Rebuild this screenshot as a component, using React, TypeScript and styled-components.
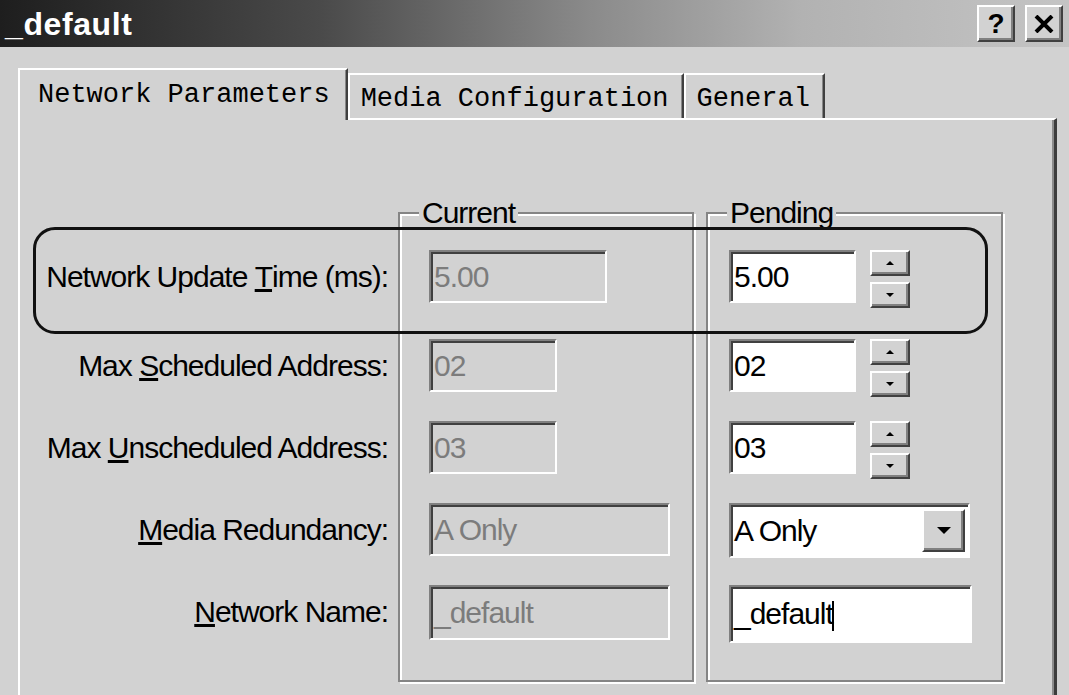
import styled, { createGlobalStyle, css } from 'styled-components';

const face = '#d2d2d2';

const GlobalStyle = createGlobalStyle`
  html, body {
    margin: 0;
    padding: 0;
    background: ${face};
  }
  body {
    font-family: 'Liberation Sans', Arial, sans-serif;
  }
`;

const raised = css`
  box-sizing: border-box;
  background: ${face};
  border-top: 2px solid #fff;
  border-left: 2px solid #fff;
  border-right: 2px solid #404040;
  border-bottom: 2px solid #404040;
  box-shadow: inset -2px -2px 0 #808080;
`;

const uiText = css`
  font-family: 'Liberation Sans', Arial, sans-serif;
  font-size: 30px;
  letter-spacing: -1px;
  line-height: 34px;
  white-space: nowrap;
`;

// rows of a column; the first row sits a little further from the rest
const rowStack = css`
  display: flex;
  flex-direction: column;
  gap: 29px;
  & > div:first-of-type {
    margin-bottom: 7px;
  }
`;

const Window = styled.div`
  position: relative;
  width: 1069px;
  height: 695px;
  overflow: hidden;
  background: ${face};
`;

const TitleBar = styled.div`
  height: 47px;
  box-sizing: border-box;
  display: flex;
  align-items: center;
  justify-content: space-between;
  padding: 0 6px 0 5px;
  background: linear-gradient(
    to right,
    #1e1e1e 0%,
    #4a4a4a 30%,
    #8a8a8a 55%,
    #b2b2b2 75%,
    #c4c4c4 100%
  );
`;

const Title = styled.span`
  color: #fff;
  font-weight: bold;
  font-size: 32px;
  letter-spacing: 0.6px;
  line-height: 32px;
`;

const CaptionButtons = styled.div`
  display: flex;
  gap: 10px;
`;

const CaptionButton = styled.div`
  ${raised};
  width: 38px;
  height: 37px;
  display: flex;
  align-items: center;
  justify-content: center;
  font-weight: bold;
  font-size: 28px;
  line-height: 1;
  color: #000;
`;

const Body = styled.div`
  padding-top: 21px;
`;

const TabStrip = styled.div`
  position: relative;
  z-index: 1;
  display: flex;
  align-items: flex-end;
  height: 50px;
  margin-left: 18px;
`;

const Tab = styled.div<{ $active?: boolean }>`
  box-sizing: border-box;
  height: ${(p) => (p.$active ? 52 : 45)}px;
  margin-bottom: ${(p) => (p.$active ? -2 : 0)}px;
  padding: ${(p) => (p.$active ? '10px 16px 0 18px' : '9px 13px 0 11px')};
  background: ${face};
  border-top: 2px solid #fff;
  border-left: 2px solid #fff;
  border-right: 2px solid #404040;
  box-shadow: inset -1px 0 0 #888;
  font-family: 'Liberation Mono', 'Courier New', monospace;
  font-size: 27px;
  line-height: 30px;
  color: #000;
  white-space: nowrap;
`;

const Panel = styled.div`
  box-sizing: border-box;
  margin-left: 18px;
  width: 1039px;
  height: 600px;
  border-top: 2px solid #fff;
  border-left: 2px solid #fff;
  border-right: 3px solid #3c3c3c;
  box-shadow: inset -2px 0 0 #8c8c8c;
  padding-top: 92px;
  display: flex;
`;

const LabelColumn = styled.div`
  ${rowStack};
  width: 368px;
  margin-right: 10px;
  padding-top: 38px;
`;

const Label = styled.div`
  ${uiText};
  height: 53px;
  display: flex;
  align-items: center;
  justify-content: flex-end;
  color: #000;
`;

const GroupBox = styled.div<{ $width: number; $pad: number; $gap?: number }>`
  ${rowStack};
  position: relative;
  box-sizing: border-box;
  width: ${(p) => p.$width}px;
  height: 470px;
  margin-left: ${(p) => p.$gap ?? 0}px;
  padding: 36px 0 0 ${(p) => p.$pad}px;
  border: 2px solid #858585;
  box-shadow: inset 2px 2px 0 #fff, 2px 2px 0 #fff;
`;

const GroupCaption = styled.span`
  ${uiText};
  position: absolute;
  top: -18px;
  left: 19px;
  padding: 0 3px;
  background: ${face};
  color: #000;
`;

const FieldRow = styled.div`
  height: 53px;
  display: flex;
  align-items: flex-start;
  gap: 14px;
`;

const Field = styled.div<{ $width: number; $height?: number; $disabled?: boolean }>`
  ${uiText};
  box-sizing: border-box;
  width: ${(p) => p.$width}px;
  height: ${(p) => p.$height ?? 53}px;
  display: flex;
  align-items: center;
  justify-content: space-between;
  padding: 0 3px;
  border-top: 2px solid #808080;
  border-left: 2px solid #808080;
  border-right: 2px solid #fff;
  border-bottom: 2px solid #fff;
  box-shadow: inset 2px 2px 0 #404040;
  background: ${(p) => (p.$disabled ? face : '#fff')};
  color: ${(p) => (p.$disabled ? '#7c7c7c' : '#000')};
`;

const Caret = styled.span`
  display: inline-block;
  width: 2px;
  height: 30px;
  margin-left: -1px;
  vertical-align: middle;
  background: #000;
`;

const Spinner = styled.div`
  display: flex;
  flex-direction: column;
  gap: 6px;
`;

const SpinButton = styled.div`
  ${raised};
  width: 40px;
  height: 26px;
  display: flex;
  align-items: center;
  justify-content: center;
`;

const Arrow = styled.span<{ $dir: 'up' | 'down'; $size: number }>`
  width: 0;
  height: 0;
  border-left: ${(p) => p.$size}px solid transparent;
  border-right: ${(p) => p.$size}px solid transparent;
  ${(p) =>
    p.$dir === 'up'
      ? `border-bottom: ${p.$size}px solid #000;`
      : `border-top: ${p.$size}px solid #000;`}
`;

const DropButton = styled.div`
  ${raised};
  width: 43px;
  height: 43px;
  display: flex;
  align-items: center;
  justify-content: center;
`;

const Highlight = styled.div`
  position: absolute;
  left: 33px;
  top: 227px;
  width: 955px;
  height: 107px;
  box-sizing: border-box;
  border: 3px solid #111;
  border-radius: 22px;
  pointer-events: none;
`;

const SpinBox = () => (
  <Spinner>
    <SpinButton>
      <Arrow $dir="up" $size={4} />
    </SpinButton>
    <SpinButton>
      <Arrow $dir="down" $size={4} />
    </SpinButton>
  </Spinner>
);

const App = () => {
  return (
    <Window>
      <GlobalStyle />
      <TitleBar>
        <Title>_default</Title>
        <CaptionButtons>
          <CaptionButton>?</CaptionButton>
          <CaptionButton>
            <svg width="20" height="18" viewBox="0 0 20 18">
              <path d="M2 1 L18 17 M18 1 L2 17" stroke="#000" strokeWidth="4" />
            </svg>
          </CaptionButton>
        </CaptionButtons>
      </TitleBar>
      <Body>
        <TabStrip>
          <Tab $active>Network Parameters</Tab>
          <Tab>Media Configuration</Tab>
          <Tab>General</Tab>
        </TabStrip>
        <Panel>
          <LabelColumn>
            <Label>
              Network Update&nbsp;<u>T</u>ime (ms):
            </Label>
            <Label>
              Max&nbsp;<u>S</u>cheduled Address:
            </Label>
            <Label>
              Max&nbsp;<u>U</u>nscheduled Address:
            </Label>
            <Label>
              <u>M</u>edia Redundancy:
            </Label>
            <Label>
              <u>N</u>etwork Name:
            </Label>
          </LabelColumn>

          <GroupBox $width={296} $pad={29}>
            <GroupCaption>Current</GroupCaption>
            <FieldRow>
              <Field $width={178} $disabled>5.00</Field>
            </FieldRow>
            <FieldRow>
              <Field $width={128} $disabled>02</Field>
            </FieldRow>
            <FieldRow>
              <Field $width={128} $disabled>03</Field>
            </FieldRow>
            <FieldRow>
              <Field $width={241} $disabled>A Only</Field>
            </FieldRow>
            <FieldRow>
              <Field $width={241} $height={55} $disabled>_default</Field>
            </FieldRow>
          </GroupBox>

          <GroupBox $width={297} $pad={21} $gap={12}>
            <GroupCaption>Pending</GroupCaption>
            <FieldRow>
              <Field $width={127}>5.00</Field>
              <SpinBox />
            </FieldRow>
            <FieldRow>
              <Field $width={127}>02</Field>
              <SpinBox />
            </FieldRow>
            <FieldRow>
              <Field $width={127}>03</Field>
              <SpinBox />
            </FieldRow>
            <FieldRow>
              <Field $width={241} $height={55}>
                A Only
                <DropButton>
                  <Arrow $dir="down" $size={7} />
                </DropButton>
              </Field>
            </FieldRow>
            <FieldRow>
              <Field $width={243} $height={58}>
                <span>
                  _default
                  <Caret />
                </span>
              </Field>
            </FieldRow>
          </GroupBox>
        </Panel>
      </Body>
      <Highlight />
    </Window>
  );
};

export default App;
